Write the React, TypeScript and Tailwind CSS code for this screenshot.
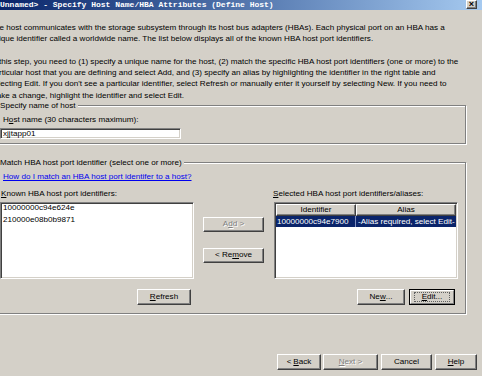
import type { ReactNode } from 'react'

const raised =
  'bg-[#d4d0c8] border border-t-white border-l-white border-r-[#404040] border-b-[#404040] shadow-[inset_-1px_-1px_0_#808080]'
const sunken =
  'bg-white border border-t-[#808080] border-l-[#808080] border-r-white border-b-white shadow-[inset_1px_1px_0_#404040,inset_-1px_-1px_0_#d4d0c8]'
const group =
  '-ml-[8px] w-[474px] border border-[#808080] shadow-[inset_1px_1px_0_#fff,1px_1px_0_#fff] pl-[7px] pr-[7px]'

function Btn({ className = '', disabled = false, children }: { className?: string; disabled?: boolean; children: ReactNode }) {
  return (
    <div
      className={`flex items-center justify-center ${raised} ${
        disabled ? 'text-[#808080] [text-shadow:1px_1px_0_#fff]' : 'text-black'
      } ${className}`}
    >
      {children}
    </div>
  )
}

export default function App() {
  return (
    <div className="w-[482px] h-[376px] overflow-hidden bg-[#d4d0c8] text-black text-[8.1px] font-['Liberation_Sans',Arial,sans-serif] flex flex-col">
      {/* title bar, cropped */}
      <div className="h-[10px] shrink-0 flex items-start justify-between bg-linear-to-r from-[#0a246a] to-[#a6caf0]">
        <span className="font-['Liberation_Mono',monospace] font-bold text-[8px] leading-[9px] text-white whitespace-nowrap">
          Unnamed&gt; - Specify Host Name/HBA Attributes (Define Host)
        </span>
        <div className={`mr-[5px] w-[11px] h-[9px] flex items-center justify-center ${raised} text-[9px] font-bold leading-none`}>
          ×
        </div>
      </div>

      <div className="-ml-[10px] mt-[12px] leading-[11.3px] whitespace-nowrap">
        <p>The host communicates with the storage subsystem through its host bus adapters (HBAs). Each physical port on an HBA has a</p>
        <p>unique identifier called a worldwide name. The list below displays all of the known HBA host port identifiers.</p>
        <p className="mt-[11.3px]">
          In this step, you need to (1) specify a unique name for the host, (2) match the specific HBA host port identifiers (one or more) to the
        </p>
        <p>particular host that you are defining and select Add, and (3) specify an alias by highlighting the identifier in the right table and</p>
        <p>selecting Edit. If you don't see a particular identifier, select Refresh or manually enter it yourself by selecting New. If you need to</p>
        <p>make a change, highlight the identifier and select Edit.</p>
      </div>

      <fieldset className={`${group} pb-[4px]`}>
        <legend className="pr-[2px] leading-[9px] bg-[#d4d0c8]">Specify name of host</legend>
        <div className="pt-[4px] pl-[3px] leading-[11.3px]">
          H<span className="underline">o</span>st name (30 characters maximum):
        </div>
        <div className={`mt-[3px] w-[181px] h-[11px] ${sunken} flex items-center pl-[2px] leading-none`}>xjjtapp01</div>
      </fieldset>

      <fieldset className={`${group} mt-[14px] pb-[8px]`}>
        <legend className="pr-[2px] leading-[9px] bg-[#d4d0c8]">Match HBA host port identifier (select one or more)</legend>
        <div className="pt-[4px] pl-[3px] leading-[11.3px]">
          <span className="text-[#0000ee] underline">How do I match an HBA host port identifer to a host?</span>
        </div>

        <div className="mt-[5px] flex">
          <div className="w-[194px] flex flex-col">
            <div className="leading-[11.3px] pl-[1px]">
              <span className="underline">K</span>nown HBA host port identifiers:
            </div>
            <div className={`mt-[3px] h-[77px] ${sunken} pl-[2px]`}>
              <div className="-mt-[1px] leading-[12px]">
                <div>10000000c94e624e</div>
                <div>210000e08b0b9871</div>
              </div>
            </div>
            <div className="mt-[10px] flex justify-end pr-[3px]">
              <Btn className="w-[54px] h-[16px]">
                <span className="underline">R</span>efresh
              </Btn>
            </div>
          </div>

          <div className="ml-[9px] w-[61px] pt-[29px] flex flex-col gap-[16px]">
            <Btn disabled className="h-[15px]">
              A<span className="underline">d</span>d &gt;
            </Btn>
            <Btn className="h-[15px]">
              &lt; Re<span className="underline">m</span>ove
            </Btn>
          </div>

          <div className="ml-[10px] w-[184px] flex flex-col">
            <div className="leading-[11.3px] -ml-[1px]">
              <span className="underline">S</span>elected HBA host port identifiers/aliases:
            </div>
            <div className={`mt-[3px] h-[77px] ${sunken} p-[1px]`}>
              <div className="flex h-[12px]">
                <div className={`w-[80px] ${raised} flex items-center justify-center leading-none`}>Identifier</div>
                <div className={`flex-1 ${raised} flex items-center justify-center leading-none`}>Alias</div>
              </div>
              <div className="flex h-[11px] bg-[#0a246a] text-white leading-[11px]">
                <div className="w-[80px] pl-[1px] border-r border-[#8090c0]">10000000c94e7900</div>
                <div className="flex-1 pl-[2px] whitespace-nowrap">-Alias required, select Edit-</div>
              </div>
            </div>
            <div className="mt-[10px] flex justify-end gap-[4px] pr-[3px]">
              <Btn className="w-[48px] h-[16px]">
                Ne<span className="underline">w</span>...
              </Btn>
              <div className="w-[46px] h-[16px] border border-black">
                <div className="h-full px-[3px] py-[1px] bg-[#d4d0c8] border border-t-white border-l-white border-r-[#808080] border-b-[#808080]">
                  <div className="h-full border border-dotted border-[#606060] flex items-center justify-center leading-[8px]">
                    <span className="underline">E</span>dit...
                  </div>
                </div>
              </div>
            </div>
          </div>
        </div>
      </fieldset>

      <div className="mt-[40px] flex justify-end gap-[2px] pr-[5px]">
        <Btn className="w-[44px] h-[16px] gap-[2px]">
          <span>&lt;</span>
          <span>
            <span className="underline">B</span>ack
          </span>
        </Btn>
        <Btn disabled className="w-[55px] h-[16px]">
          <span className="underline">N</span>ext &gt;
        </Btn>
        <Btn className="w-[51px] h-[16px] ml-[1px]">Cancel</Btn>
        <Btn className="w-[42px] h-[16px] ml-[1px]">
          <span className="underline">H</span>elp
        </Btn>
      </div>
    </div>
  )
}
